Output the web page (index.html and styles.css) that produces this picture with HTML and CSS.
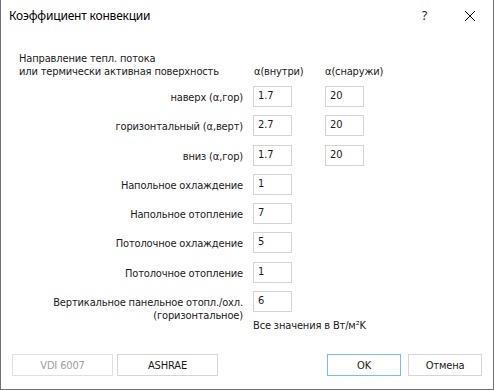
FILE: index.html
```html
<!DOCTYPE html>
<html lang="ru">
<head>
    <meta charset="UTF-8">
    <title>Коэффициент конвекции</title>
    <link rel="stylesheet" href="styles.css">
</head>
<body>
    <div class="window">
        <div class="titlebar">
            <span class="title">Коэффициент конвекции</span>
            <span class="help">?</span>
            <svg class="close" width="12" height="12" viewBox="0 0 12 12">
                <path d="M1 1 L11 11 M11 1 L1 11" stroke="#000" stroke-width="1" fill="none"/>
            </svg>
        </div>

        <div class="content">
            <div class="intro">
                <div class="intro-text">
                    <div>Направление тепл. потока</div>
                    <div>или термически активная поверхность</div>
                </div>
                <div class="col-head">α(внутри)</div>
                <div class="col-head second">α(снаружи)</div>
            </div>

            <div class="form">
                <div class="label">наверх (α,гор)</div>
                <div class="field">1.7</div>
                <div class="field">20</div>

                <div class="label">горизонтальный (α,верт)</div>
                <div class="field">2.7</div>
                <div class="field">20</div>

                <div class="label">вниз (α,гор)</div>
                <div class="field">1.7</div>
                <div class="field">20</div>

                <div class="label">Напольное охлаждение</div>
                <div class="field">1</div>
                <div></div>

                <div class="label">Напольное отопление</div>
                <div class="field">7</div>
                <div></div>

                <div class="label">Потолочное охлаждение</div>
                <div class="field">5</div>
                <div></div>

                <div class="label">Потолочное отопление</div>
                <div class="field">1</div>
                <div></div>

                <div class="label tall">Вертикальное панельное отопл./охл.<br>(горизонтальное)</div>
                <div class="field">6</div>
                <div></div>

                <div class="note">Все значения в Вт/м²K</div>
            </div>
        </div>

        <div class="footer">
            <button class="btn wide" disabled>VDI 6007</button>
            <button class="btn wide">ASHRAE</button>
            <div class="spacer"></div>
            <button class="btn default">OK</button>
            <button class="btn">Отмена</button>
        </div>
    </div>
</body>
</html>
```

FILE: styles.css
```css
body {
    margin: 0;
    background: #fff;
    font-family: "DejaVu Sans Condensed", "DejaVu Sans", sans-serif;
    font-size: 11px;
    letter-spacing: -0.15px;
    color: #1a1a1a;
}
.window {
    width: 494px;
    height: 390px;
    box-sizing: border-box;
    border: 1px solid #707070;
    border-top: none;
    display: flex;
    flex-direction: column;
    background: #fff;
}
.titlebar {
    height: 31px;
    display: flex;
    align-items: center;
    padding-left: 8px;
}
.title {
    font-family: "Noto Sans", sans-serif;
    font-size: 12px;
    letter-spacing: -0.2px;
    color: #000;
    flex: 1;
}
.help {
    font-family: "Noto Sans", sans-serif;
    font-size: 12px;
    margin-right: 37px;
}
.close {
    margin-right: 17px;
}
.content {
    padding-left: 18px;
    margin-top: 21px;
}
.intro {
    display: flex;
    align-items: flex-end;
    line-height: 13px;
}
.intro-text {
    width: 234px;
}
.col-head {
    width: 71px;
    padding-left: 1px;
}
.col-head.second {
    width: auto;
    padding-left: 0;
}
.form {
    display: grid;
    grid-template-columns: 234px 72px 39px;
    row-gap: 8.3px;
    margin-top: 8px;
}
.label {
    text-align: right;
    padding-right: 10px;
    padding-top: 5px;
    line-height: 13px;
    white-space: nowrap;
}
.label.tall {
    grid-row: span 2;
}
.field {
    width: 39px;
    height: 21px;
    box-sizing: border-box;
    border: 1px solid #d4d4d4;
    padding: 2px 0 0 4px;
    line-height: 13px;
}
.note {
    grid-column: 2 / 4;
    line-height: 13px;
    margin-top: -1px;
    white-space: nowrap;
}
.footer {
    margin-top: auto;
    display: flex;
    padding: 0 11px 13px 11px;
}
.btn {
    font-family: inherit;
    font-size: 11px;
    letter-spacing: inherit;
    color: #1a1a1a;
    background: #fff;
    border: 1px solid #d6d6d6;
    height: 22px;
    width: 74px;
    padding: 0;
}
.btn.wide {
    width: 101px;
    margin-right: 4px;
}
.btn:disabled {
    color: #a0a0a0;
    border-color: #e0e0e0;
}
.btn.default {
    border-color: #7cbde8;
    margin-right: 7px;
}
.spacer {
    flex: 1;
}
```
